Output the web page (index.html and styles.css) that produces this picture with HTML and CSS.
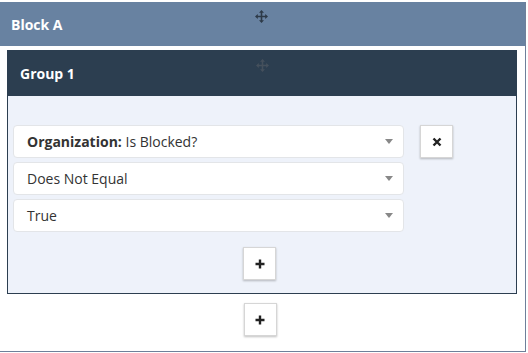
FILE: index.html
```html
<!DOCTYPE html>
<html lang="en">
<head>
    <meta charset="UTF-8">
    <meta name="viewport" content="width=device-width, initial-scale=1.0">
    <title>Block A</title>
    <link rel="stylesheet" href="styles.css">
</head>
<body>
    <div class="block">
        <div class="block-header">
            <span class="title">Block A</span>
            <svg class="move" width="13" height="13" viewBox="0 0 13 13">
                <path d="M6.5 0 L9 2.8 H7.3 V5.7 H10.2 V4 L13 6.5 L10.2 9 V7.3 H7.3 V10.2 H9 L6.5 13 L4 10.2 H5.7 V7.3 H2.8 V9 L0 6.5 L2.8 4 V5.7 H5.7 V2.8 H4 Z" />
            </svg>
        </div>
        <div class="block-body">
            <div class="group">
                <div class="group-header">
                    <span class="title">Group 1</span>
                    <svg class="move dim" width="13" height="13" viewBox="0 0 13 13">
                        <path d="M6.5 0 L9 2.8 H7.3 V5.7 H10.2 V4 L13 6.5 L10.2 9 V7.3 H7.3 V10.2 H9 L6.5 13 L4 10.2 H5.7 V7.3 H2.8 V9 L0 6.5 L2.8 4 V5.7 H5.7 V2.8 H4 Z" />
                    </svg>
                </div>
                <div class="group-body">
                    <div class="rule">
                        <div class="selects">
                            <div class="select"><span><b>Organization:</b> Is Blocked?</span><i class="caret"></i></div>
                            <div class="select"><span>Does Not Equal</span><i class="caret"></i></div>
                            <div class="select"><span>True</span><i class="caret"></i></div>
                        </div>
                        <button class="btn" title="Remove">
                            <svg width="10" height="10" viewBox="0 0 10 10"><path d="M1.5 1.5 L8.5 8.5 M8.5 1.5 L1.5 8.5" /></svg>
                        </button>
                    </div>
                    <div class="add-row">
                        <button class="btn" title="Add">
                            <svg width="10" height="10" viewBox="0 0 10 10"><path d="M5 0.5 V9.5 M0.5 5 H9.5" /></svg>
                        </button>
                    </div>
                </div>
            </div>
            <div class="add-row outer">
                <button class="btn" title="Add">
                    <svg width="10" height="10" viewBox="0 0 10 10"><path d="M5 0.5 V9.5 M0.5 5 H9.5" /></svg>
                </button>
            </div>
        </div>
    </div>
</body>
</html>
```

FILE: styles.css
```css
body {
    margin: 0;
    padding: 2px 0 0 0;
    font-family: "Open Sans", Arial, sans-serif;
    background-color: #fff;
    color: #333;
}
.block {
    margin-left: -1px;
    width: 525px;
    height: 349px;
    border: 1px solid #6e809a;
    border-top: none;
}
.block-header {
    position: relative;
    height: 44px;
    background-color: #6882a1;
    display: flex;
    align-items: center;
    padding-left: 11px;
}
.title {
    color: #fff;
    font-weight: bold;
    font-size: 14px;
}
.move {
    position: absolute;
    left: 255px;
    top: 8px;
    fill: #2d3a48;
}
.move.dim {
    left: 248px;
    top: 8px;
    fill: #45505c;
}
.block-body {
    padding: 4px 8px 0 7px;
}
.group {
    border: 1px solid #2c3e50;
    background-color: #eef2fa;
}
.group-header {
    position: relative;
    height: 45px;
    background-color: #2c3e50;
    display: flex;
    align-items: center;
    padding-left: 12px;
}
.group-body {
    padding: 29px 0 13px 5px;
}
.rule {
    display: flex;
    align-items: flex-start;
    gap: 16px;
}
.selects {
    width: 391px;
    display: flex;
    flex-direction: column;
    gap: 4px;
}
.select {
    height: 31px;
    background-color: #fff;
    border: 1px solid #e3e5e8;
    border-radius: 4px;
    display: flex;
    align-items: center;
    justify-content: space-between;
    padding: 0 10px 0 13px;
    font-size: 14px;
    color: #333;
}
.caret {
    width: 0;
    height: 0;
    border-left: 4px solid transparent;
    border-right: 4px solid transparent;
    border-top: 5px solid #888;
}
.btn {
    width: 33px;
    height: 33px;
    padding: 0;
    background-color: #fff;
    border: 1px solid #d6d6d6;
    box-shadow: 0 1px 2px rgba(0, 0, 0, 0.25);
    display: flex;
    align-items: center;
    justify-content: center;
    cursor: pointer;
}
.btn svg {
    stroke: #222;
    stroke-width: 2.4;
    fill: none;
}
.add-row {
    display: flex;
    justify-content: center;
    margin-top: 15px;
    padding-right: 10px;
}
.add-row.outer {
    margin-top: 9px;
    padding-right: 4px;
}
```
